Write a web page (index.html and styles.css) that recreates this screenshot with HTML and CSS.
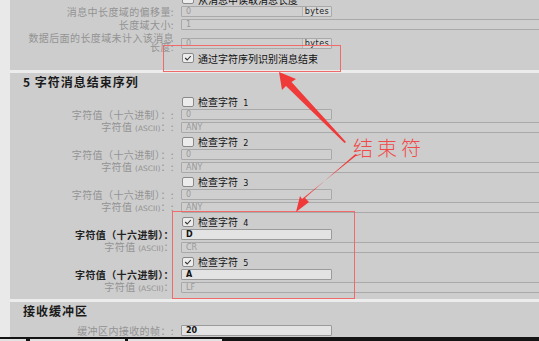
FILE: index.html
```html
<!DOCTYPE html>
<html lang="zh-CN">
<head>
    <meta charset="UTF-8">
    <title>字符消息结束序列</title>
    <link rel="stylesheet" href="styles.css">
</head>
<body>

    <div class="page">
        <div class="panel panel-top">
            <div class="row first">
                <span class="lbl"></span>
                <span class="check"><span class="box"></span><span class="check-text">从消息中读取消息长度</span></span>
            </div>
            <div class="row">
                <span class="lbl">消息中长度域的偏移量:</span>
                <span class="field short"><span class="val">0</span><span class="unit">bytes</span></span>
            </div>
            <div class="row">
                <span class="lbl">长度域大小:</span>
                <span class="field wide"><span class="val">1</span></span>
            </div>
            <div class="row tall">
                <span class="lbl">数据后面的长度域未计入该消息<br>长度:</span>
                <span class="field short"><span class="val">0</span><span class="unit">bytes</span></span>
            </div>
            <div class="row">
                <span class="lbl"></span>
                <span class="check on"><span class="box"><svg viewBox="0 0 12 10"><path d="M2.5 5 L5 7.5 L9.5 2.5" /></svg></span><span class="check-text">通过字符序列识别消息结束</span></span>
            </div>
        </div>

        <div class="sep"></div>

        <div class="panel panel-seq">
            <div class="sec-title">5 字符消息结束序列</div>

            <div class="row">
                <span class="lbl"></span>
                <span class="check"><span class="box"></span><span class="check-text">检查字符 <b>1</b></span></span>
            </div>
            <div class="row">
                <span class="lbl">字符值（十六进制）：:</span>
                <span class="field short"><span class="val">0</span></span>
            </div>
            <div class="row">
                <span class="lbl">字符值 <small>(ASCII)</small>：:</span>
                <span class="field wide"><span class="val">ANY</span></span>
            </div>

            <div class="row">
                <span class="lbl"></span>
                <span class="check"><span class="box"></span><span class="check-text">检查字符 <b>2</b></span></span>
            </div>
            <div class="row">
                <span class="lbl">字符值（十六进制）：:</span>
                <span class="field short"><span class="val">0</span></span>
            </div>
            <div class="row">
                <span class="lbl">字符值 <small>(ASCII)</small>：:</span>
                <span class="field wide"><span class="val">ANY</span></span>
            </div>

            <div class="row">
                <span class="lbl"></span>
                <span class="check"><span class="box"></span><span class="check-text">检查字符 <b>3</b></span></span>
            </div>
            <div class="row">
                <span class="lbl">字符值（十六进制）：:</span>
                <span class="field short"><span class="val">0</span></span>
            </div>
            <div class="row">
                <span class="lbl">字符值 <small>(ASCII)</small>：:</span>
                <span class="field wide"><span class="val">ANY</span></span>
            </div>

            <div class="row">
                <span class="lbl"></span>
                <span class="check on"><span class="box"><svg viewBox="0 0 12 10"><path d="M2.5 5 L5 7.5 L9.5 2.5" /></svg></span><span class="check-text">检查字符 <b>4</b></span></span>
            </div>
            <div class="row">
                <span class="lbl active">字符值（十六进制）：</span>
                <span class="field short edit"><span class="val">D</span></span>
            </div>
            <div class="row">
                <span class="lbl">字符值 <small>(ASCII)</small>：</span>
                <span class="field wide"><span class="val">CR</span></span>
            </div>

            <div class="row">
                <span class="lbl"></span>
                <span class="check on"><span class="box"><svg viewBox="0 0 12 10"><path d="M2.5 5 L5 7.5 L9.5 2.5" /></svg></span><span class="check-text">检查字符 <b>5</b></span></span>
            </div>
            <div class="row">
                <span class="lbl active">字符值（十六进制）：</span>
                <span class="field short edit"><span class="val">A</span></span>
            </div>
            <div class="row">
                <span class="lbl">字符值 <small>(ASCII)</small>：</span>
                <span class="field wide"><span class="val">LF</span></span>
            </div>
        </div>

        <div class="sep"></div>

        <div class="panel panel-recv">
            <div class="sec-title">接收缓冲区</div>
            <div class="row">
                <span class="lbl">缓冲区内接收的帧：:</span>
                <span class="field short edit"><span class="val">20</span></span>
            </div>
        </div>
    </div>

    <div class="tabbar">
        <span class="tab t1"></span>
        <span class="tab t2"></span>
        <span class="tab t3"></span>
    </div>

    <!-- annotation layer -->
    <div class="mark mark-1"></div>
    <div class="mark mark-2"></div>
    <div class="note">结束符</div>
    <svg class="arrows" viewBox="0 0 539 341">
        <polygon points="346,142 344.5,143 286,86 282,90 279,72 296,79 291.5,82" />
        <polygon points="357,155 355.5,154 305,198 309,202 296,212 300,196 302,199" />
    </svg>

</body>
</html>
```

FILE: styles.css
```css
body {
    margin: 0;
    width: 539px;
    height: 341px;
    overflow: hidden;
    position: relative;
    background-color: #e9e9e9;
    font-family: "DejaVu Sans", "Noto Sans CJK SC", sans-serif;
    font-size: 10px;
    color: #1a1a1a;
}
.page {
    padding-left: 10px;
    height: 337px;
    overflow: hidden;
}
.panel {
    background-color: #cdcdcd;
    display: flow-root;
}
.panel-top {
    height: 70px;
}
.panel-seq {
    height: 225.5px;
}
.panel-recv {
    height: 35.5px;
}
.sep {
    height: 3px;
    background-color: #ececec;
}
.sec-title {
    font-family: "Noto Sans CJK SC", sans-serif;
    font-weight: bold;
    font-size: 12px;
    letter-spacing: 1px;
    padding-left: 13px;
    line-height: 16px;
    padding-top: 1px;
}
.panel-seq .sec-title {
    height: 20.33px;
}
.panel-recv .sec-title {
    height: 21.5px;
}
.row {
    display: grid;
    grid-template-columns: 171px 1fr;
    align-items: center;
    height: 13.333px;
}
.row.first {
    margin-top: -8.33px;
}
.row.tall {
    height: 19.33px;
    align-items: end;
}
.row.tall .field {
    margin-bottom: 1.5px;
}
.lbl {
    text-align: right;
    padding-right: 7px;
    color: #939393;
    font-family: "Noto Sans CJK SC", sans-serif;
    font-size: 10px;
    letter-spacing: 0.4px;
    line-height: 9px;
    white-space: nowrap;
}
.lbl small {
    font-family: "DejaVu Sans", sans-serif;
    font-size: 7.5px;
    letter-spacing: 0;
}
.lbl.active {
    color: #222;
    font-weight: bold;
}
.field {
    box-sizing: border-box;
    height: 11px;
    border: 1px solid #a9a9a9;
    border-radius: 1px;
    background-color: #cfcfcf;
    display: flex;
    align-items: center;
    font-size: 8px;
    color: #9a9a9a;
}
.field.short {
    width: 151px;
}
.field.wide {
    margin-right: -3px;
}
.field.edit {
    background-color: #e3e3e3;
    border-color: #9a9a9a;
    color: #111;
    font-weight: bold;
}
.field .val {
    flex: 1;
    padding-left: 4px;
}
.field .unit {
    border-left: 1px solid #b4b4b4;
    background-color: #d6d6d6;
    color: #222;
    height: 100%;
    width: 28px;
    text-align: center;
    line-height: 9px;
    letter-spacing: 0.5px;
}
.check {
    display: flex;
    align-items: center;
    margin-left: 1px;
}
.check .box {
    box-sizing: border-box;
    width: 12px;
    height: 10px;
    border: 1px solid #8a8a8a;
    border-radius: 2px;
    background-color: #ececec;
    display: flex;
}
.check .box svg {
    width: 10px;
    height: 8px;
}
.check .box path {
    fill: none;
    stroke: #333;
    stroke-width: 1.4;
}
.check-text {
    margin-left: 4px;
    font-family: "Noto Sans CJK SC", sans-serif;
    font-size: 10px;
    color: #111;
    white-space: nowrap;
}
.check-text b {
    font-family: "DejaVu Sans", sans-serif;
    font-weight: normal;
    font-size: 8px;
    margin-left: 3px;
}
.tabbar {
    height: 4px;
    background-color: #141414;
    display: flex;
    align-items: flex-end;
}
.tab {
    height: 2px;
    background-color: #e2e2e2;
}
.t1 {
    width: 26px;
}
.t2 {
    width: 95px;
    margin-left: 4px;
}
.t3 {
    width: 94px;
    margin-left: 3px;
}
.mark {
    position: absolute;
    border: 1px solid #f06a6a;
    box-sizing: border-box;
}
.mark-1 {
    left: 163px;
    top: 45px;
    width: 178px;
    height: 27px;
}
.mark-2 {
    left: 172px;
    top: 211px;
    width: 183px;
    height: 88px;
}
.note {
    position: absolute;
    left: 353px;
    top: 133px;
    font-family: "Noto Sans CJK SC", sans-serif;
    font-weight: 300;
    font-size: 20px;
    letter-spacing: 4px;
    color: #ef4b4b;
}
.arrows {
    position: absolute;
    left: 0;
    top: 0;
    width: 539px;
    height: 341px;
}
.arrows polygon {
    fill: #f03a3a;
}
```
